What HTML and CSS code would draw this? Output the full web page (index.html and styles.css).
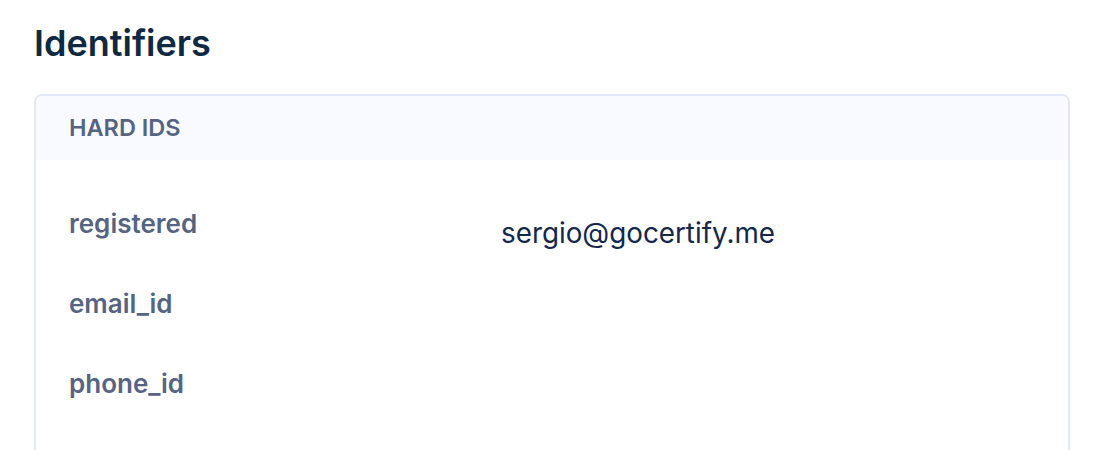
FILE: index.html
```html
<!DOCTYPE html>
<html lang="en">
<head>
<meta charset="utf-8">
<title>Identifiers</title>
<link rel="stylesheet" href="styles.css">
</head>
<body>
<main class="page">
  <h1 class="title">Identifiers</h1>
  <section class="card">
    <header class="card-head">HARD IDS</header>
    <div class="card-body">
      <div class="row">
        <div class="label">registered</div>
        <div class="value">sergio@gocertify.me</div>
      </div>
      <div class="row">
        <div class="label">email_id</div>
        <div class="value"></div>
      </div>
      <div class="row">
        <div class="label">phone_id</div>
        <div class="value"></div>
      </div>
    </div>
  </section>
</main>
</body>
</html>
```
FILE: styles.css
```css
html, body {
  margin: 0;
  padding: 0;
  background: #ffffff;
}
body {
  font-family: Inter, "Noto Sans", sans-serif;
}
.page {
  padding: 21px 36px 0 34px;
}
.title {
  margin: 0;
  font-size: 36px;
  line-height: 44px;
  font-weight: 600;
  color: #0f2942;
}
.card {
  margin-top: 29px;
  border: 2px solid #e3e8f7;
  border-radius: 8px;
  overflow: hidden;
}
.card-head {
  height: 64px;
  box-sizing: border-box;
  padding: 0 33px;
  display: flex;
  align-items: center;
  background: #f8faff;
  font-size: 23.5px;
  line-height: 28px;
  font-weight: 600;
  color: #566482;
}
.card-body {
  padding: 48px 33px 60px;
  display: flex;
  flex-direction: column;
  gap: 48px;
}
.row {
  display: grid;
  grid-template-columns: 432px 1fr;
  align-items: start;
  height: 32px;
}
.label {
  font-size: 26px;
  line-height: 32px;
  font-weight: 600;
  color: #566482;
}
.value {
  margin-top: 8px;
  font-size: 27.8px;
  line-height: 34px;
  font-weight: 400;
  color: #13284a;
}
```
